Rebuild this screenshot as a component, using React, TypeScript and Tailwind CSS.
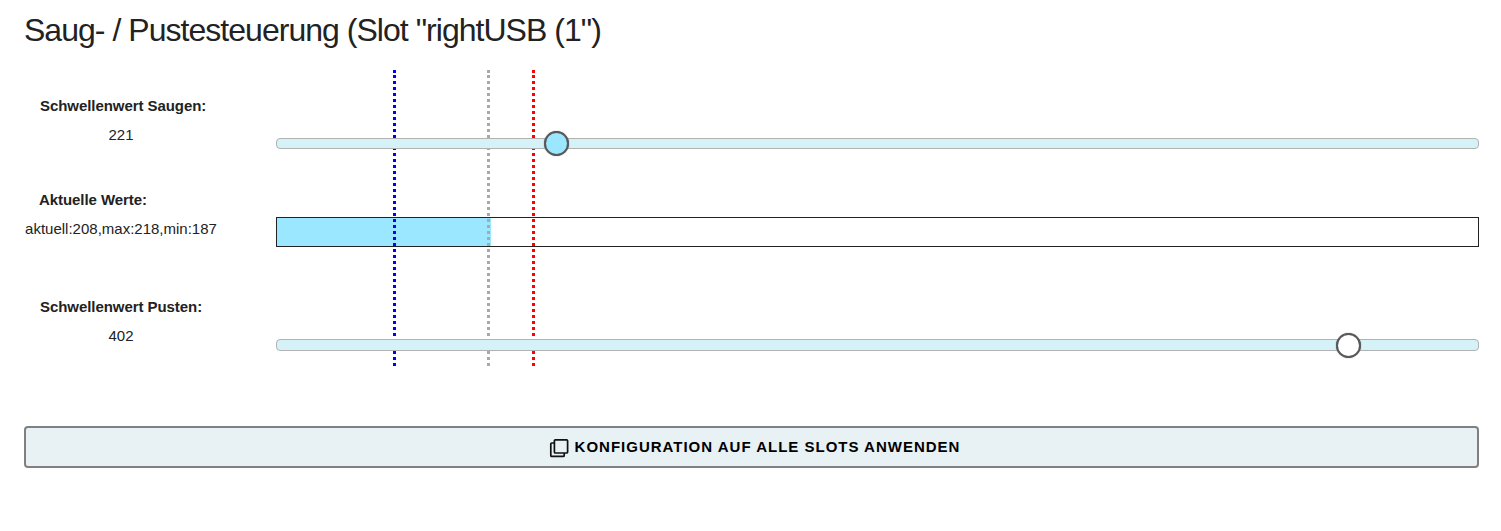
type LabelProps = { title: string; value: string; titleClass?: string };

function Label({ title, value, titleClass = "pl-4" }: LabelProps) {
  return (
    <div className="w-[252px] shrink-0 leading-[29px]">
      <div className={`text-[15px] font-bold tracking-[-0.06px] ${titleClass}`}>{title}</div>
      <div className="w-[194px] whitespace-nowrap text-center text-[15px]">{value}</div>
    </div>
  );
}

type SliderProps = { offset: number; trackClass: string; thumbClass: string };

function Slider({ offset, trackClass, thumbClass }: SliderProps) {
  return (
    <div className={`relative z-10 grow rounded-[4px] border border-[#b2b2b2] bg-[#d5f2f8] ${trackClass}`}>
      <div
        className={`absolute size-[25px] rounded-full border-2 border-[#58595b] shadow-[0_0_1px_#58595b] ${thumbClass}`}
        style={{ left: offset }}
      />
    </div>
  );
}

export default function App() {
  return (
    <main className="h-[531px] bg-white px-6 pr-[22px] font-['Liberation_Sans',Arial,sans-serif] text-[#222]">
      <h2 className="h-[70px] pt-[10px] text-[32px] leading-[40px] tracking-[-0.97px]">
        Saug- / Pustesteuerung (Slot "rightUSB (1")
      </h2>
      <section className="relative h-[296px] pt-[21px]">
        <div className="flex h-[94px] items-start">
          <Label title="Schwellenwert Saugen:" value="221" />
          <Slider offset={267} trackClass="mt-[47px] h-[11px]" thumbClass="-top-[8px] bg-[#9be7ff]" />
        </div>
        <div className="flex h-[107px] items-start">
          <Label title="Aktuelle Werte:" value="aktuell:208,max:218,min:187" titleClass="pl-[15px]" />
          <div className="mt-8 h-[30px] grow border border-[#222]">
            <div className="h-full w-[214px] bg-[#9be7ff]" />
          </div>
        </div>
        <div className="flex items-start">
          <Label title="Schwellenwert Pusten:" value="402" />
          <Slider offset={1059} trackClass="mt-[47px] h-3" thumbClass="-top-[7px] bg-white" />
        </div>
        <div className="absolute top-0 left-[369px] h-[296px] border-l-[3px] border-dotted border-[#00f]" />
        <div className="absolute top-0 left-[463px] h-[296px] border-l-[3px] border-dotted border-[#a9a9a9]" />
        <div className="absolute top-0 left-[508px] h-[296px] border-l-[3px] border-dotted border-[#f00]" />
      </section>
      <button className="mt-[60px] flex h-[42px] w-full items-center justify-center rounded-[4px] border-2 border-[#808080] bg-[#e8f1f4] pl-[6px] text-[15px] font-bold tracking-[1px] text-black">
        <svg className="mt-[2px] mr-[6px] size-5" viewBox="0 0 20 20" fill="none" stroke="#111" strokeWidth="1.7">
          <rect x="5.4" y="1.8" width="13.2" height="13.2" rx="1" />
          <path d="M5.4 5H2.8a1 1 0 0 0-1 1v11.4a1 1 0 0 0 1 1h11.4a1 1 0 0 0 1-1v-2.4" />
        </svg>
        <span>KONFIGURATION AUF ALLE SLOTS ANWENDEN</span>
      </button>
    </main>
  );
}
